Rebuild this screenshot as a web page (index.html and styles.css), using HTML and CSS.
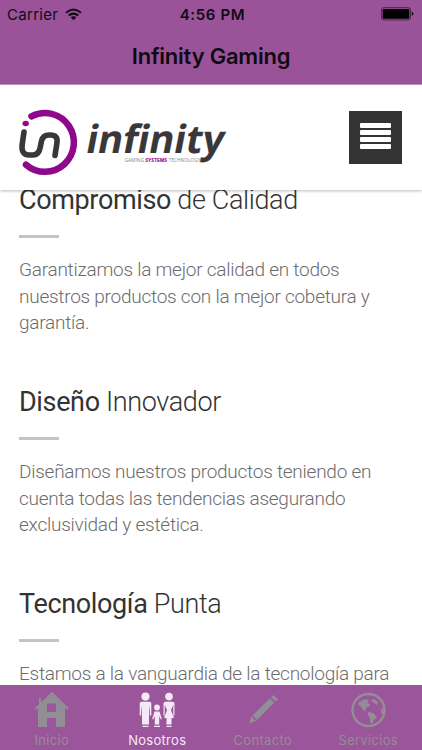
FILE: index.html
```html
<!DOCTYPE html>
<html lang="es">
<head>
<meta charset="utf-8">
<title>Infinity Gaming</title>
<link rel="stylesheet" href="styles.css">
</head>
<body>
<div class="app">
  <header class="topbar">
    <div class="status">
      <div class="carrier"><span>Carrier</span>
        <svg width="17" height="13" viewBox="0 0 17 13"><g fill="none" stroke="#100b12" stroke-width="2"><path d="M1 4.7Q8.5-1.8 16 4.7"/><path d="M3.7 7.6Q8.5 3.6 13.3 7.6"/></g><path d="M5.6 9.3Q8.5 7.1 11.4 9.3L8.5 12.2z" fill="#100b12"/></svg>
      </div>
      <time class="clock">4:56 PM</time>
      <svg class="battery" width="33" height="14" viewBox="0 0 33 14"><rect x=".5" y=".7" width="29" height="12.2" rx="2.3" fill="none" stroke="#47264a"/><rect x="1.7" y="1.9" width="26.6" height="9.8" rx="1.2"/><path d="M30.8 4.7Q34 6.8 30.8 8.9z"/></svg>
    </div>
    <h1 class="title">Infinity Gaming</h1>
  </header>
  <div class="brandbar">
    <svg class="logo" width="212" height="72" viewBox="0 0 212 72">
      <path d="M13.5 9.3A29 29.4 0 1 1 8 57.7" fill="none" stroke="#8f078b" stroke-width="6.6" stroke-linecap="round"/>
      <ellipse cx="7.7" cy="16.5" rx="3.2" ry="2.8" fill="#8f078b"/>
      <path d="M6 25L4.3 36.5Q2.5 48 11 48H15Q21 48 22.3 40L23.5 34Q25 28 31 28H32.5Q40 28 39 35.5L37 48.5" fill="none" stroke="#39373a" stroke-width="5.6" stroke-linecap="round" stroke-linejoin="round"/>
      <text class="wordmark" transform="translate(66.5 46) skewX(-11)" textLength="137.5" lengthAdjust="spacingAndGlyphs">infinity</text>
      <text class="tagline" x="106.5" y="52" textLength="76" lengthAdjust="spacingAndGlyphs">GAMING <tspan class="tagline-strong">SYSTEMS</tspan> TECHNOLOGY</text>
    </svg>
    <div class="menu"><i></i><i></i><i></i><i></i></div>
  </div>
  <main class="content">
    <section><h2><b>Compromiso</b> de Calidad</h2><hr><p>Garantizamos la mejor calidad en todos<br>nuestros productos con la mejor cobetura y<br>garantía.</p></section>
    <section><h2><b>Diseño</b> Innovador</h2><hr><p>Diseñamos nuestros productos teniendo en<br>cuenta todas las tendencias asegurando<br>exclusividad y estética.</p></section>
    <section><h2><b>Tecnología</b> Punta</h2><hr><p>Estamos a la vanguardia de la tecnología para</p></section>
  </main>
  <nav class="tabs">
    <div class="tab"><svg width="36" height="36" viewBox="0 0 36 36"><path fill="currentColor" fill-rule="evenodd" d="M18 2.8L31 15.5V35H22V26H13V35H4V15.5zM13 11.5V20H22V11.5z"/><path d="M1.5 17L18 1.2 34 17M6 12V6" fill="none" stroke="currentColor" stroke-width="2"/></svg><span>Inicio</span></div>
    <div class="tab active"><svg width="38" height="36" viewBox="0 0 38 36"><g fill="currentColor"><circle cx="7.5" cy="4.6" r="4.1"/><path d="M3.5 9.7H11.5Q13.3 9.7 13.3 11.5V23.5H11.8V13L11 20V32.5H4V20L3.2 13V23.5H1.7V11.5Q1.7 9.7 3.5 9.7zM4.5 33.8H10.5V35H4.5z"/><circle cx="19" cy="15.5" r="2.9"/><path d="M16.5 19.5H21.5L23.8 27 22.8 27.5 21.2 24V32.5H16.8V24L15.2 27.5 14.2 27zM16 33.8H22V35H16z"/><circle cx="31" cy="4.6" r="3.8"/><path d="M27.5 9.7H34.5Q36.5 9.7 36.5 11.5V23.5H35.3V13L33 18 36 26H33.5V32.5H28.5V26H26L29 18 26.7 13V23.5H25.5V11.5Q25.5 9.7 27.5 9.7zM28.5 33.8H33.5V35H28.5z"/></g></svg><span>Nosotros</span></div>
    <div class="tab"><svg width="36" height="36" viewBox="0 0 36 36"><path fill="currentColor" d="M4 31.5L6.5 24.5 11 29zM7.5 23.5L25 6.2 29.3 10.5 12 28zM26 5.2L28.5 3 33 7.3 30.5 9.5z"/></svg><span>Contacto</span></div>
    <div class="tab"><svg width="36" height="36" viewBox="0 0 36 36"><circle cx="18.5" cy="18" r="16" fill="none" stroke="currentColor" stroke-width="2.4"/><path fill="currentColor" d="M8 12Q11 7 17 7.5L19 9 17 11 20 12 20 14 17 15 15 18 17 20 13 18 11 15zM21 8L24 7 28 10 27 13 24 11zM18 20L23 21 27 25 24 28 22 32 20 30 20 26 18 23zM31 17L33 16V22L31 21z"/></svg><span>Servicios</span></div>
  </nav>
</div>
</body>
</html>
```
FILE: styles.css
```css
* { box-sizing: border-box; }
body { margin: 0; }
.app { width: 422px; height: 750px; overflow: hidden; display: flex; flex-direction: column; background: #fff; font-family: Roboto, sans-serif; }
.topbar { height: 85px; flex: none; background: #9a5399; border-bottom: 1px solid #c49ac4; color: #100b12; font-family: Inter, sans-serif; }
.status { height: 28px; padding: 0 8px 0 7px; display: grid; grid-template-columns: 1fr auto 1fr; align-items: center; font-size: 15px; }
.carrier { display: flex; align-items: center; gap: 7px; letter-spacing: .3px; }
.clock { font-weight: 600; letter-spacing: .65px; padding-left: 4px; }
.battery { justify-self: end; }
.title { margin: 14px 0 0; text-align: center; font-size: 22px; line-height: 28px; font-weight: 600; letter-spacing: -.23px; }
.brandbar { height: 105px; flex: none; display: flex; justify-content: space-between; align-items: flex-start; padding: 20px 20px 0 18px; background: #fff; box-shadow: 0 1px 3px #0004; z-index: 1; }
.logo { overflow: visible; margin-top: 2px; }
.wordmark { font: 700 39px "Open Sans", sans-serif; fill: #39373a; stroke: #39373a; stroke-width: .2px; stroke-linejoin: round; }
.tagline { font: 5.3px "Open Sans", sans-serif; fill: #888; transform: translateY(3px); }
.tagline-strong { font-weight: 800; fill: #a12a9b; }
.menu { width: 53px; height: 53px; margin-top: 6px; padding: 12px 11px; background: #333; display: flex; flex-direction: column; gap: 2px; }
.menu i { height: 5px; background: #fff; border-radius: 1px; }
.content { height: 495px; overflow: hidden; padding: 0 19px; }
section { height: 202px; }
h2 { margin: 0; height: 45px; font-size: 27px; line-height: 20px; font-weight: 300; color: #333; white-space: nowrap; letter-spacing: -.36px; }
h2 b { font-weight: 400; }
hr { width: 40px; height: 3px; margin: 0; border: 0; background: #c4c4c4; }
p { margin: 19px 0 0; font-size: 19px; line-height: 26.5px; font-weight: 300; color: #6c6c6c; white-space: nowrap; letter-spacing: -.25px; }
.tabs { height: 65px; flex: none; display: grid; grid-template-columns: repeat(4, 1fr); background: #9b559b; color: #938e95; font-family: Inter, sans-serif; }
.tab { display: flex; flex-direction: column; align-items: center; padding: 7px 2px 0 0; font-size: 13px; line-height: 16px; letter-spacing: .3px; }
.tab span { margin-top: 4px; }
.active { color: #f5e9f8; }
```
